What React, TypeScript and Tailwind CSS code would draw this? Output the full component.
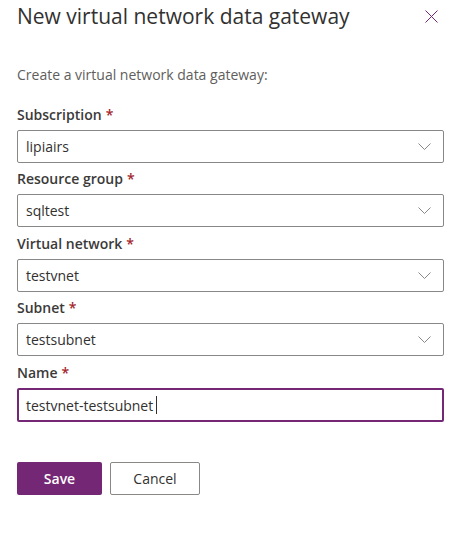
const purple = "#742774";

const fields = [
  { label: "Subscription", value: "lipiairs", gap: "h-[32px]" },
  { label: "Resource group", value: "sqltest", gap: "h-[31px]" },
  { label: "Virtual network", value: "testvnet", gap: "h-[32px]" },
  { label: "Subnet", value: "testsubnet", gap: "h-[31px]" },
];

function Chevron() {
  return (
    <svg width="13" height="7" viewBox="0 0 13 7" fill="none" stroke="#8a8886" strokeWidth="1">
      <path d="M0.5 0.5 L6.5 6.5 L12.5 0.5" />
    </svg>
  );
}

function Label({ text, h }: { text: string; h: string }) {
  return (
    <div className={`${h} flex items-center text-[14px] font-semibold text-[#3b3a39]`}>
      {text}
      <span className="ml-1 text-[#a4262c]">*</span>
    </div>
  );
}

export default function App() {
  return (
    <div
      className="w-[451px] h-[536px] bg-white pl-[17px] pr-[7px]"
      style={{ fontFamily: '"Segoe UI", "Open Sans", sans-serif' }}
    >
      {/* header */}
      <div className="flex items-start justify-between pt-[1px]">
        <h1 className="text-[21px] leading-[30px] font-normal text-[#323130]">
          New virtual network data gateway
        </h1>
        <button className="mt-[9px] mr-[6px]" aria-label="Close">
          <svg width="13" height="13" viewBox="0 0 13 13" stroke={purple} strokeWidth="1">
            <path d="M0.5 0.5 L12.5 12.5 M12.5 0.5 L0.5 12.5" />
          </svg>
        </button>
      </div>

      <p className="mt-[34px] text-[14px] leading-[20px] text-[#605e5c]">
        Create a virtual network data gateway:
      </p>

      <div className="mt-[13px]">
        {fields.map((f) => (
          <div key={f.label}>
            <Label text={f.label} h={f.gap} />
            <div className="h-[33px] border border-[#8a8886] rounded-[2px] flex items-center justify-between pl-[8px] pr-[12px] text-[14px] text-[#323130]">
              <span>{f.value}</span>
              <Chevron />
            </div>
          </div>
        ))}
        <Label text="Name" h="h-[32px]" />
        <div
          className="h-[34px] border-2 rounded-[2px] flex items-center pl-[7px] text-[14px] text-[#323130]"
          style={{ borderColor: purple }}
        >
          <span>testvnet-testsubnet</span>
          <span className="ml-[3px] w-px h-[18px] bg-[#323130]" />
        </div>
      </div>

      <div className="mt-[40px] flex gap-[8px]">
        <button className="w-[85px] h-[33px] rounded-[2px] text-white text-[14px] font-semibold" style={{ background: purple }}>
          Save
        </button>
        <button className="w-[90px] h-[33px] rounded-[2px] border border-[#8a8886] text-[#323130] text-[14px]">
          Cancel
        </button>
      </div>
    </div>
  );
}
